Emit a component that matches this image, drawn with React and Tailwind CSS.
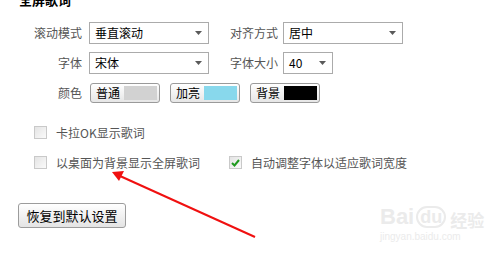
import React from 'react';

const Arrow = () => (
  <svg width="7" height="4" viewBox="0 0 7 4" className="shrink-0">
    <path d="M0 0h7L3.5 4z" fill="#5a5a5a" />
  </svg>
);

const Select = ({ value, width }) => (
  <div className={`flex items-center justify-between h-[22px] border border-[#ababab] bg-white pl-[5px] pr-[6px] text-black ${width}`}>
    <span>{value}</span>
    <Arrow />
  </div>
);

const ColorButton = ({ label, swatch }) => (
  <div className="flex items-center h-[20px] w-[70px] border border-[#9a9a9a] rounded-[3px] bg-gradient-to-b from-white to-[#e6e6e6] pl-[5px] pr-[2px] text-black">
    <span className="w-[28px]">{label}</span>
    <span className={`h-[14px] flex-1 ${swatch}`} />
  </div>
);

const Checkbox = ({ checked }) => (
  <span className="flex items-center justify-center w-[13px] h-[13px] border border-[#c9c9c9] bg-gradient-to-br from-[#e4e4e4] to-[#fafafa] shrink-0">
    {checked && (
      <svg width="9" height="8" viewBox="0 0 9 8">
        <path d="M1 4l2.5 2.5L8 1" stroke="#1f9a1f" strokeWidth="2" fill="none" />
      </svg>
    )}
  </span>
);

export default function App() {
  return (
    <div
      className="relative w-[498px] h-[260px] overflow-hidden bg-white text-[12px] leading-none text-[#555]"
      style={{ fontFamily: '"Noto Sans CJK SC", "DejaVu Sans", sans-serif' }}
    >
      <div className="pl-[19px] mt-[-7px] text-[13px] font-bold text-black h-[14px]">全屏歌词</div>

      <div className="mt-[15px] flex flex-col gap-[8px]">
        <div className="flex items-center">
          <span className="w-[82px] text-right">滚动模式</span>
          <div className="ml-[7px]"><Select value="垂直滚动" width="w-[120px]" /></div>
          <span className="ml-[21px] w-[48px] text-right">对齐方式</span>
          <div className="ml-[5px]"><Select value="居中" width="w-[120px]" /></div>
        </div>
        <div className="flex items-center">
          <span className="w-[82px] text-right">字体</span>
          <div className="ml-[7px]"><Select value="宋体" width="w-[120px]" /></div>
          <span className="ml-[21px] w-[48px] text-right">字体大小</span>
          <div className="ml-[5px]"><Select value="40" width="w-[50px]" /></div>
        </div>
        <div className="flex items-center mt-[1px]">
          <span className="w-[82px] text-right">颜色</span>
          <div className="ml-[8px] flex gap-[10px]">
            <ColorButton label="普通" swatch="bg-[#d2d2d2]" />
            <ColorButton label="加亮" swatch="bg-[#88d8ec]" />
            <ColorButton label="背景" swatch="bg-black" />
          </div>
        </div>
      </div>

      <div className="mt-[23px] pl-[34px] flex flex-col gap-[17px]">
        <div className="flex items-center gap-[9px]">
          <Checkbox />
          <span>卡拉OK显示歌词</span>
        </div>
        <div className="flex items-center">
          <Checkbox />
          <span className="ml-[9px] w-[173px]">以桌面为背景显示全屏歌词</span>
          <Checkbox checked />
          <span className="ml-[9px]">自动调整字体以适应歌词宽度</span>
        </div>
      </div>

      <div className="mt-[34px] pl-[18px]">
        <button className="w-[108px] h-[25px] border border-[#9c9c9c] rounded-[3px] bg-gradient-to-b from-white to-[#e4e4e4] text-[13px] text-black">
          恢复到默认设置
        </button>
      </div>

      <svg className="absolute left-0 top-0" width="498" height="260">
        <line x1="255" y1="237" x2="120" y2="176" stroke="#f01010" strokeWidth="2" />
        <path d="M112 172 L124 171 L119 181 Z" fill="#f01010" />
      </svg>

      <div className="absolute left-[380px] top-[206px] flex flex-col items-start text-[#ebebeb] font-bold">
        <div className="flex items-end gap-[2px]">
          <span className="text-[22px]" style={{ fontFamily: '"Liberation Sans", sans-serif' }}>Bai</span>
          <span className="text-[18px] border-2 border-[#ebebeb] rounded-full px-[2px]" style={{ fontFamily: '"Liberation Sans", sans-serif' }}>du</span>
          <span className="text-[17px] ml-[2px]">经验</span>
        </div>
        <span className="mt-[4px] text-[10px] font-normal" style={{ fontFamily: '"Liberation Sans", sans-serif' }}>jingyan.baidu.com</span>
      </div>
    </div>
  );
}
